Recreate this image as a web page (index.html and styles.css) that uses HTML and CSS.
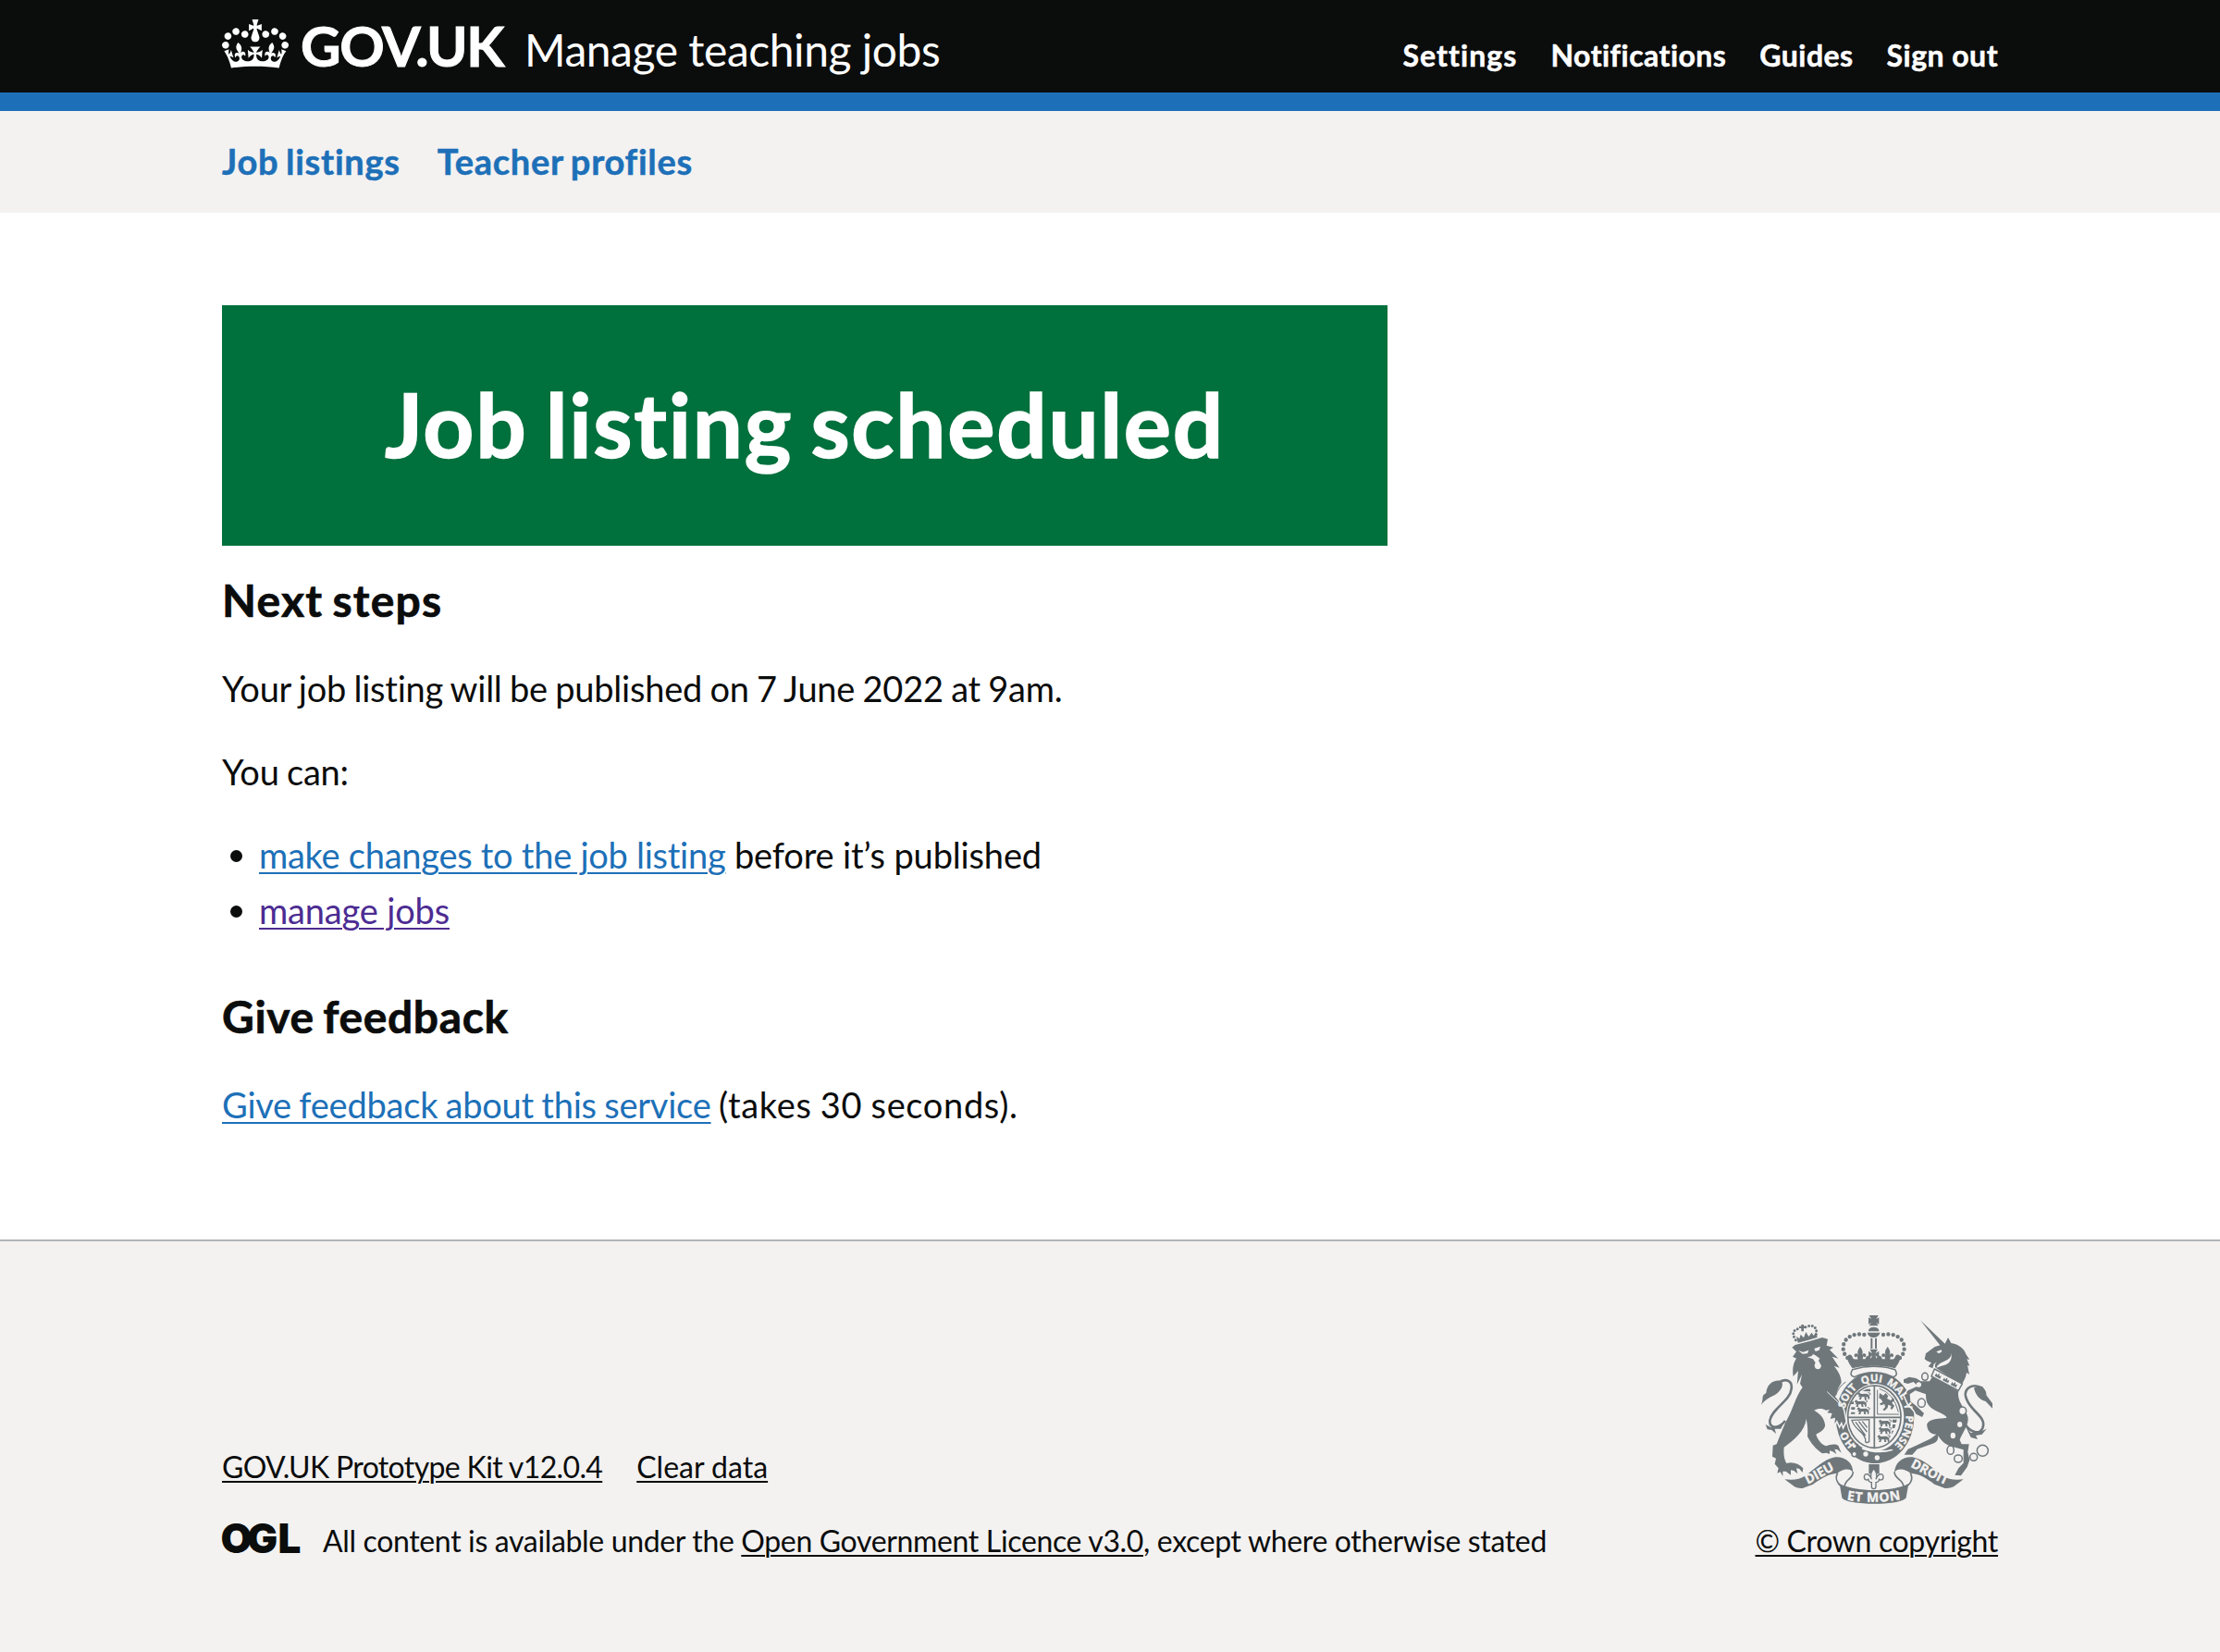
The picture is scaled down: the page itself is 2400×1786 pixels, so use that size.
FILE: index.html
```html
<!DOCTYPE html>
<html lang="en">
<head>
<meta charset="utf-8">
<title>Job listing scheduled - Manage teaching jobs - GOV.UK</title>
<link rel="stylesheet" href="styles.css">
</head>
<body>
<header class="header">
  <div class="container header-row">
    <a class="logo" href="#">
      <svg class="crown" viewBox="0 0 132 97" aria-hidden="true"><path fill="currentColor" fill-rule="evenodd" d="M25 30.2c3.5 1.5 7.7-.2 9.1-3.7 1.5-3.6-.2-7.8-3.9-9.2-3.6-1.4-7.6.3-9.1 3.9-1.4 3.5.3 7.5 3.9 9zM9 39.5c3.6 1.5 7.8-.2 9.2-3.7 1.5-3.6-.2-7.8-3.9-9.1-3.6-1.5-7.6.2-9.1 3.8-1.4 3.5.3 7.5 3.8 9zM4.4 57.2c3.5 1.5 7.7-.2 9.1-3.8 1.5-3.6-.2-7.7-3.9-9.1-3.5-1.5-7.6.3-9.1 3.8-1.4 3.5.3 7.6 3.9 9.1zm38.3-21.4c3.5 1.5 7.7-.2 9.1-3.8 1.5-3.6-.2-7.7-3.9-9.1-3.6-1.5-7.6.3-9.1 3.8-1.3 3.6.4 7.7 3.9 9.1zm64.4-5.6c-3.6 1.5-7.8-.2-9.1-3.7-1.5-3.6.2-7.8 3.8-9.2 3.6-1.4 7.7.3 9.2 3.9 1.3 3.5-.4 7.5-3.9 9zm15.9 9.3c-3.6 1.5-7.7-.2-9.1-3.7-1.5-3.6.2-7.8 3.7-9.1 3.6-1.5 7.7.2 9.2 3.8 1.5 3.5-.3 7.5-3.8 9zm4.7 17.7c-3.6 1.5-7.8-.2-9.2-3.8-1.5-3.6.2-7.7 3.9-9.1 3.6-1.5 7.7.3 9.2 3.8 1.3 3.5-.4 7.6-3.9 9.1zM89.3 35.8c-3.6 1.5-7.8-.2-9.2-3.8-1.4-3.6.2-7.7 3.9-9.1 3.6-1.5 7.7.3 9.2 3.8 1.4 3.6-.3 7.7-3.9 9.1zM69.7 17.7l8.9 4.7V9.3l-8.9 2.8c-.2-.3-.5-.6-.9-.9L72.4 0H59.6l3.5 11.2c-.3.3-.6.5-.9.9l-8.8-2.8v13.1l8.8-4.7c.3.3.6.7.9.9l-5 15.4v.1c-.2.8-.4 1.6-.4 2.4 0 4.1 3.1 7.5 7 8.1h.2c.3 0 .7.1 1 .1.4 0 .7 0 1-.1h.2c4-.6 7.1-4.1 7.1-8.1 0-.8-.1-1.7-.4-2.4V34l-5.1-15.4c.4-.2.7-.6 1-.9zM66 92.8c16.9 0 32.8 1.1 47.1 3.2 4-16.9 8.9-26.7 14-33.5l-9.6-3.4c1 4.9 1.1 7.2 0 10.2-1.5-1.4-3-4.3-4.2-8.7L108.6 76c2.8-2 5-3.2 7.5-3.3-4.4 9.4-10 11.9-13.6 11.2-4.3-.8-6.3-4.6-5.6-7.9 1-4.7 5.7-5.9 8-.5 4.3-8.7-3-11.4-7.6-8.8 7.1-7.2 7.9-13.5 2.1-21.1-8 6.1-8.1 12.3-4.5 20.8-4.7-5.4-12.1-2.5-9.5 6.2 3.4-5.2 7.9-2 7.2 3.1-.6 4.3-6.4 7.8-13.5 7.2-10.3-.9-10.9-8-11.2-13.8 2.5-.5 7.1 1.8 11 7.3L80.2 60c-4.1 4.4-8 5.3-12.3 5.4 1.4-4.4 8-11.6 8-11.6H55.5s6.4 7.2 7.9 11.6c-4.2-.1-8-1-12.3-5.4l1.4 16.4c3.9-5.5 8.5-7.7 10.9-7.3-.3 5.8-.9 12.8-11.1 13.8-7.2.6-12.9-2.9-13.5-7.2-.7-5 3.8-8.3 7.1-3.1 2.7-8.7-4.6-11.6-9.4-6.2 3.7-8.5 3.6-14.7-4.6-20.8-5.8 7.6-5 13.9 2.2 21.1-4.7-2.6-11.9.1-7.7 8.8 2.3-5.5 7.1-4.2 8.1.5.7 3.3-1.3 7.1-5.7 7.9-3.5.7-9-1.8-13.5-11.2 2.5.1 4.7 1.3 7.5 3.3l-4.7-15.4c-1.2 4.4-2.7 7.2-4.3 8.7-1.1-3-.9-5.3 0-10.2l-9.5 3.4c5 6.9 9.9 16.7 14 33.5 14.8-2.1 30.8-3.2 47.7-3.2z"/></svg>
      <span class="wordmark">GOV.UK</span>
    </a>
    <a class="service" href="#">Manage teaching jobs</a>
    <nav class="account">
      <a class="account-settings" href="#">Settings</a>
      <a href="#">Notifications</a>
      <a href="#">Guides</a>
      <a href="#">Sign out</a>
    </nav>
  </div>
</header>
<nav class="sections">
  <div class="container sections-row">
    <a href="#">Job listings</a>
    <a href="#">Teacher profiles</a>
  </div>
</nav>
<main class="container main">
  <div class="panel"><h1 class="panel-title">Job listing scheduled</h1></div>
  <h2 class="heading heading-next">Next steps</h2>
  <p class="body">Your job listing will be published on 7 June 2022 at 9am.</p>
  <p class="body">You can:</p>
  <ul class="list">
    <li><span><a class="link" href="#">make changes to the job listing</a> <span class="tail-published">before it’s published</span></span></li>
    <li><span><a class="link link-visited" href="#">manage jobs</a></span></li>
  </ul>
  <h2 class="heading heading-feedback">Give feedback</h2>
  <p class="body"><a class="link" href="#">Give feedback about this service</a> <span class="tail-takes">(takes 30 seconds).</span></p>
</main>
<footer class="footer">
  <div class="container footer-row">
    <div class="footer-meta">
      <div class="footer-links">
        <a class="footer-kit" href="#">GOV.UK Prototype Kit v12.0.4</a>
        <a class="footer-clear" href="#">Clear data</a>
      </div>
      <div class="licence">
        <svg class="ogl" viewBox="0 0 82 34" role="img" aria-label="Open Government Licence"><text class="ogl-text" x="-1.4 27 60.4" y="32.7">OGL</text></svg>
        <span>All content is available under the <a href="#">Open Government Licence v3.0</a>, except where otherwise stated</span>
      </div>
    </div>
    <div class="copyright">
      <svg class="arms" viewBox="72 66 750 612" aria-hidden="true">
        <defs>
          <path id="garter" d="M441 512A100 115 0 0 1 441 282A100 115 0 0 1 441 512"/>
          <path id="dieu" d="M214 618C250 602 284 580 324 560"/>
          <path id="etmon" d="M346 664Q437 680 530 662"/>
          <path id="droit" d="M546 552C588 572 628 598 680 620"/>
          <path id="fleur" d="M0-24C9-12 10-5 5 4C10-6 21-3 19 6C17 11 11 10 10 6L7 20H-7L-10 6C-11 10-17 11-19 6C-21-3-10-6-5 4C-10-5-9-12 0-24Z"/>
          <g id="passant"><path d="M0 4L6-2L12 3L30 2L38 7L40 18L35 22L34 14L28 12L30 21L24 21L22 12L14 13L12 21L5 21L9 13L2 13L6 8Z"/><path d="M38 6C44 6 44 0 38 0L34-2" fill="none" stroke="currentColor" stroke-width="3"/></g>
          <path id="collar-crown" d="M-10 6L-9-5L-4 0L0-9L4 0L9-5L10 6Z"/>
        </defs>
        <g fill="currentColor">
          <!-- lion crown -->
          <path d="M186 134L196 142L200 128L210 139L217 120L226 135L236 122L242 132L250 120L254 138L192 158ZM202 96h8v5h6v7h-6v10h-8v-10h-7v-7h7z"/>
          <!-- royal crown -->
          <path d="M422 66H452L445 78L454 73V95L445 90L452 100H422L429 90L420 95V73L429 78ZM420 114A18 14 0 0 1 454 114V118H420ZM416 122H458Q452 138 437 138Q420 138 416 122ZM427 140h6v34h-6zM441 140h6v34h-6zM350 202C356 188 366 192 370 206C380 212 386 206 410 208C412 194 424 194 428 206L432 196L420 206V182L432 190L424 176H450L442 190L454 182V206L442 196L446 206C450 194 462 194 464 208C488 206 494 212 504 206C508 192 518 188 524 202C520 220 512 230 506 238C474 228 400 228 368 238C362 230 354 220 350 202Z"/>
          <use href="#fleur" x="393" y="192"/><use href="#fleur" x="482" y="192"/>
          <path d="M762 302C788 284 804 310 802 325L822 352V368L800 345C780 340 768 325 762 302ZM732 420L752 448L790 440L803 434L788 452L768 456L774 468L752 462Z"/>
          <path d="M72 356C82 332 70 328 88 318C90 290 110 274 137 278C146 292 138 306 125 318C110 330 88 334 72 356ZM86 420L104 430L128 424L150 408L136 434L116 434L120 450L106 438L92 436Z"/>
          <!-- garter and shield -->
          <path fill-rule="evenodd" d="M441 248A127 149 0 0 1 441 546A127 149 0 0 1 441 248ZM441 288A94 109 0 0 0 441 506A94 109 0 0 0 441 288Z"/>
          <path class="line-5" d="M439 294A86 101 0 0 1 439 496A86 101 0 0 1 439 294ZM439 294V496M353 397H525"/>
          <use href="#passant" x="384" y="318"/><use href="#passant" x="374" y="342"/><use href="#passant" x="382" y="366"/><use href="#passant" x="452" y="406"/><use href="#passant" x="452" y="430"/><use href="#passant" x="448" y="456"/>
          <path d="M400 312l14-7l12 0l0 8ZM362 350l10-6v10h-10ZM364 364h12v8h-12ZM364 380h12v6h-14ZM498 404h14l-2 10l-12 0ZM498 420h10l-3 12l-8 0ZM496 440h6l-8 14Z"/>
          <path class="line-3" d="M449 308V387H519M455 304Q502 318 517 380"/>
          <path class="line-4" d="M366 406L422 404V476Q408 484 410 468C404 440 376 440 366 406ZM378 412L410 456M388 410L415 444M400 410L416 430"/>
          <path d="M456 318l12 8l8-8l8 10l-4 8l12 6l8-8l4 6l-8 10l8 10l-8 12l-5-4l3-8l-10-4l-2 10l-10 10l-6-4l8-8l-2-10l-12 4l-4-6l10-4l-4-8l-8-6Z"/>
          <path d="M366 480L386 484L396 500C430 518 470 520 510 494L506 520Q470 546 440 546Q396 542 370 518L386 506Z"/>
        </g>
        <g class="paper">
          <path d="M404 490Q450 512 496 500L500 504Q450 520 398 500Z"/>
          <circle cx="411" cy="516" r="8"/><circle cx="448" cy="528" r="8"/>
        </g>
        <g class="beast">
          <!-- lion -->
          <path d="M172 170L182 162L232 149L270 138L288 143L284 164L306 170L294 178L322 206L302 200L326 236L308 230C325 250 332 268 332 284L322 302L312 330C325 345 338 362 341 385L346 410L338 426L333 410L326 424L318 406L310 418L312 398L296 402L302 384L286 382L294 372L282 374C270 366 255 368 244 374C262 385 276 398 279 420C281 436 262 446 250 452C255 470 268 486 284 490C296 484 312 482 322 488L332 512L320 502L310 500L316 516L304 508L294 505L294 516L284 512L270 514C250 500 232 480 222 458C224 440 222 420 218 402C214 440 180 470 146 494C144 515 146 532 154 546C172 540 194 546 208 562L206 576L196 564L186 562L190 580L178 570L168 568L168 584L152 572L142 572L142 588L134 574L124 578L128 562L116 548L120 530L108 524L110 488L122 484C136 450 146 420 160 396C176 366 184 330 206 300L198 288L204 258L188 290L192 246L176 264C172 240 176 220 186 206L174 200L186 184Z"/>
          <!-- unicorn -->
          <path d="M628 264L712 312C705 345 735 370 742 395C748 420 722 450 716 470L722 484L746 484L742 510L748 535L740 558L720 586L700 584L712 562L728 545L728 502L700 494C670 490 655 470 645 455C648 470 640 478 628 482L578 500L562 518L536 518L548 500L575 488L622 466L640 452C615 452 608 430 610 418C618 400 650 402 674 398C668 385 645 382 626 368C608 356 606 340 606 322L572 310L554 322L556 345L575 360L600 384L594 396L574 386L568 374L548 352L536 325L548 310L575 298L582 298L566 282L548 288L534 284L534 274L552 266L574 270L590 280L618 280Z"/>
          <path d="M588 82L668 158L656 168ZM602 208L606 190L635 168L668 158L678 138L688 156C716 160 732 178 736 192L748 210L739 208L748 230L741 228L747 258L738 252C736 268 730 278 722 290L640 238C634 234 634 224 642 216L632 224L628 238L614 232L624 220L610 214Z"/>
        </g>
        <g class="outline">
          <path class="paper-fill" d="M368 242Q437 222 506 242Q518 262 500 266Q437 236 374 266Q356 262 368 242Z"/>
          <path class="paper-fill" d="M634 240L724 288L712 310L624 264Z"/>
          <path class="line-tail" d="M128 286C150 268 174 278 170 304C166 345 106 368 100 408C98 436 130 434 150 408M790 302C750 282 722 310 740 342C756 380 804 396 790 432C780 454 752 448 732 418"/>
          <circle class="paper-fill" cx="374" cy="490" r="8"/><circle class="paper-fill" cx="374" cy="516" r="8"/>
          <ellipse class="paper-fill" cx="603" cy="265" rx="10" ry="12"/>
          <ellipse class="paper-fill" cx="592" cy="350" rx="12" ry="14"/>
          <ellipse class="paper-fill" cx="725" cy="376" rx="12" ry="13"/>
          <ellipse cx="686" cy="503" rx="11" ry="14"/>
          <ellipse cx="711" cy="531" rx="13" ry="12"/>
          <ellipse cx="761" cy="526" rx="12" ry="12"/>
          <circle cx="790" cy="505" r="18"/>
        </g>
        <g class="paper">
          <path d="M192 180L208 185L226 179L222 190L206 191ZM244 174L264 167L260 179L248 183ZM222 202L236 198L240 192L248 196L262 206L258 212L267 230Q262 246 248 238Q242 230 248 220L240 208Z"/>
          <ellipse cx="716" cy="420" rx="8" ry="9"/><ellipse cx="694" cy="456" rx="8" ry="10"/><circle cx="583" cy="291" r="8"/>
          <path d="M640 184L656 178L658 184L648 190ZM664 216Q690 206 688 188Q694 214 672 226Q654 232 640 236Q646 222 664 216Z"/>
        </g>
        <path class="paper-line" d="M286 314L340 366"/>
        <path class="line-3" d="M314 326Q322 298 346 282"/>
        <g fill="currentColor">
          <use href="#collar-crown" transform="translate(646 262) rotate(27)"/>
          <use href="#collar-crown" transform="translate(672 276) rotate(27)"/>
          <use href="#collar-crown" transform="translate(698 290) rotate(27)"/>
        </g>
        <path class="pearls" d="M406 129C372 122 338 138 338 172C338 186 344 196 352 204M468 129C502 122 536 138 536 172C536 186 530 196 522 204"/>
        <path class="pearls pearls-small" d="M184 146C170 126 176 110 196 110M216 104C238 94 256 104 250 128"/>
        <!-- ribbon -->
        <g fill="currentColor">
          <path d="M148 598C175 602 198 598 216 586C245 566 275 532 312 526C346 524 370 545 370 576C360 558 332 566 320 578C290 580 268 594 240 614L206 627Q190 628 180 622Z"/>
          <path d="M728 598C700 602 678 598 660 586C632 566 600 532 562 526C528 524 506 545 504 576C514 558 542 566 556 578C586 580 608 594 634 614L668 627Q684 628 696 622Z"/>
          <path d="M326 612C380 640 495 640 550 612L542 658C528 684 348 684 334 658Z"/>
          <path d="M421 549H455V580H421Z"/>
        </g>
        <path class="line-5" d="M370 574C370 598 344 596 342 622M320 578C308 596 322 610 328 618M504 574C504 598 532 596 534 622M556 578C566 596 556 610 548 618"/>
        <path class="fleur-line" d="M437 562C446 574 450 584 444 598C450 578 468 576 468 590C468 602 456 602 454 596Q456 606 444 608L444 622A7 7 0 0 1 430 622L430 608Q418 606 420 596C418 602 406 602 406 590C406 576 424 578 430 598C424 584 428 574 437 562Z"/>
        <!-- mottoes -->
        <g class="motto">
          <text class="motto-ring"><textPath href="#garter" startOffset="14.5%">HO</textPath></text>
          <text class="motto-ring"><textPath href="#garter" startOffset="35%">SOIT</textPath></text>
          <text class="motto-ring"><textPath href="#garter" startOffset="48.5%">QUI</textPath></text>
          <text class="motto-ring"><textPath href="#garter" startOffset="61%">MAL</textPath></text>
          <text class="motto-ring"><textPath href="#garter" startOffset="70%">Y</textPath></text>
          <text class="motto-ring"><textPath href="#garter" startOffset="82%">PENSE</textPath></text>
          <text class="motto-ribbon"><textPath href="#dieu" startOffset="48%">DIEU</textPath></text>
          <text class="motto-ribbon motto-wide"><textPath href="#etmon" startOffset="50%">ET MON</textPath></text>
          <text class="motto-ribbon"><textPath href="#droit" startOffset="50%">DROIT</textPath></text>
        </g>
      </svg>
      <a href="#">© Crown copyright</a>
    </div>
  </div>
</footer>
</body>
</html>
```
FILE: styles.css
```css
* { box-sizing: border-box; }
body {
  margin: 0;
  background: #fff;
  color: #0b0c0c;
  font-family: Lato, "Open Sans", sans-serif;
  font-size: 38px;
  line-height: 50px;
}
a { color: inherit; text-decoration: none; }
svg { display: block; flex: none; }
h1, h2, p, ul { margin: 0; padding: 0; font-weight: 400; }
.container { width: 1920px; margin: 0 auto; }

.header { height: 120px; background: #0b0c0c; color: #fff; border-bottom: 20px solid #1d70b8; }
.header-row { display: flex; align-items: baseline; padding-top: 19px; }
.logo { display: flex; align-items: baseline; gap: 13px; }
.crown { align-self: flex-start; width: 72px; height: 53px; margin-top: 2px; }
.wordmark { width: 221px; font-size: 60px; line-height: 60px; font-weight: 700; letter-spacing: -0.022em; -webkit-text-stroke: 1px; }
.service { margin-left: 21px; font-size: 48px; line-height: 60px; letter-spacing: -0.0095em; }
.account { display: flex; gap: 36px; margin-left: auto; font-size: 32px; line-height: 40px; font-weight: 700; letter-spacing: 0.0145em; -webkit-text-stroke: 0.5px; }
.account-settings { letter-spacing: 0.034em; }

.sections { height: 110px; padding-top: 29px; background: #f3f2f1; color: #1d70b8; font-weight: 700; letter-spacing: 0.0195em; word-spacing: -0.06em; -webkit-text-stroke: 0.5px; }
.sections-row { display: flex; gap: 40px; }

.main { height: 1110px; padding-top: 100px; }
.panel { width: 1260px; height: 260px; padding-top: 78px; background: #00703c; color: #fff; text-align: center; }
.panel-title { font-size: 96px; line-height: 100px; font-weight: 700; letter-spacing: 0.018em; word-spacing: -0.06em; -webkit-text-stroke: 1.5px; }
.heading { font-size: 48px; line-height: 60px; font-weight: 700; word-spacing: -0.06em; -webkit-text-stroke: 0.7px; }
.heading-next { margin-top: 29px; letter-spacing: 0.026em; }
.heading-feedback { margin-top: 60px; letter-spacing: 0.0135em; }
.heading + .body { margin-top: 40px; }
.body { margin-top: 40px; letter-spacing: -0.006em; word-spacing: -0.03em; }
.list { display: grid; gap: 10px; margin-top: 40px; list-style: none; letter-spacing: -0.007em; }
.list li { display: flex; align-items: center; gap: 18px; padding-left: 9px; }
.list li::before { content: ""; width: 13px; height: 13px; border-radius: 50%; background: #0b0c0c; margin-top: 3px; }
.tail-published { letter-spacing: -0.004em; }
.tail-takes { letter-spacing: 0.0176em; }
.link { color: #1d70b8; text-decoration: underline 2px; text-underline-offset: 4px; }
.link-visited { color: #4c2c92; letter-spacing: -0.0045em; }

.footer { height: 446px; padding-top: 80px; background: #f3f2f1; border-top: 2px solid #b1b4b6; font-size: 32px; line-height: 40px; letter-spacing: -0.0108em; }
.footer a { text-decoration: underline 2px; text-underline-offset: 3px; }
.footer-row { display: flex; justify-content: space-between; align-items: flex-end; }
.footer-meta { display: grid; gap: 40px; }
.footer-links { display: flex; gap: 37px; }
.footer-kit { letter-spacing: -0.02em; }
.footer-clear { letter-spacing: 0; }
.licence { display: flex; gap: 27px; }
.ogl { width: 82px; height: 34px; overflow: visible; }
.ogl-text { font: 900 44px Inter, sans-serif; letter-spacing: 0; fill: #0b0c0c; }
.copyright { display: flex; flex-direction: column; align-items: flex-end; gap: 20px; }

.arms { width: 250px; height: 204px; margin-right: 6px; color: #6f777b; }
.paper, .paper-fill { fill: #f3f2f1; }
.beast { fill: currentColor; stroke: #f3f2f1; stroke-width: 9; paint-order: stroke; }
.outline { fill: none; stroke: currentColor; stroke-width: 4.5; }
.line-3, .line-4, .line-5 { fill: none; stroke: currentColor; stroke-width: 3; }
.line-4 { stroke-width: 4; }
.line-5 { stroke-width: 5; }
.line-tail { stroke-width: 8; }
.paper-line { fill: none; stroke: #f3f2f1; stroke-width: 3; }
.pearls { fill: none; stroke: currentColor; stroke-width: 13; stroke-linecap: round; stroke-dasharray: 0 16; }
.pearls-small { stroke-width: 9; stroke-dasharray: 0 11; }
.fleur-line { fill: #f3f2f1; stroke: currentColor; stroke-width: 4; }
.motto { fill: #f3f2f1; stroke: #f3f2f1; stroke-width: 1; font-family: "Open Sans", sans-serif; font-weight: 700; text-anchor: middle; letter-spacing: 0; }
.motto-ring { font-size: 34px; }
.motto-ribbon { font-size: 42px; }
.motto-wide { letter-spacing: 2px; }
```
